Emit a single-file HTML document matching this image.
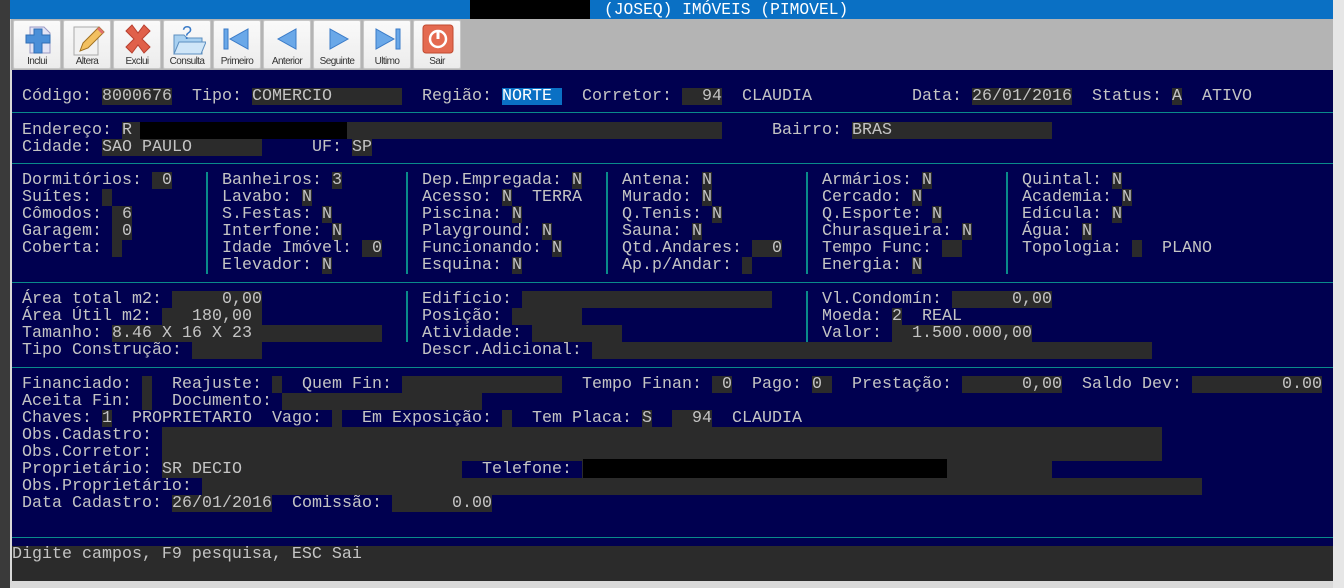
<!DOCTYPE html>
<html><head><meta charset="utf-8"><style>
*{margin:0;padding:0;box-sizing:border-box}
body{width:1344px;height:588px;overflow:hidden;background:#d9d9d9;position:relative;font-family:"Liberation Mono","DejaVu Sans Mono",monospace}
#lf{position:absolute;left:0;top:0;width:10px;height:588px;background:#3a3a3a}
#rt{position:absolute;left:1333px;top:0;width:11px;height:588px;background:#e6e6e6}
#tb{position:absolute;left:10px;top:0;width:1323px;height:19px;background:#0a70c4}
#blk{position:absolute;left:470px;top:0;width:120px;height:22px;background:#000}
#tt{position:absolute;left:604px;top:1px;color:#fff;font-size:16.3px;line-height:17px;white-space:pre}
#tool{position:absolute;left:11px;top:19px;width:1322px;height:51px;background:#b4b4b4}
.bt{position:absolute;top:20px;width:48px;height:49px;background:linear-gradient(#fafafa,#ececec);border:1px solid #c8c8c8;border-radius:2px}
.bt span{position:absolute;left:0;width:100%;bottom:1px;text-align:center;font-family:"Liberation Sans",sans-serif;font-size:10px;letter-spacing:-0.6px;color:#333}
.bt svg{position:absolute;left:6px;top:2px}
#main{position:absolute;left:12px;top:70px;width:1321px;height:476px;background:#000050}
#st{position:absolute;left:12px;top:546px;width:1321px;height:35px;background:#2b2b2b}
.hl{position:absolute;left:12px;width:1321px;height:1px;background:#0a8a8a}
.vl{position:absolute;width:2px;background:#0a8a8a}
.r{position:absolute;left:0;height:17px;width:1344px;margin-top:1px}
.r span,.r b{position:absolute;top:0;height:17px;line-height:17px;font-size:16.67px;color:#c4c4c4;white-space:pre;font-weight:normal}
.r b{background:#2b2b2b}
.r i{position:absolute;top:0;height:17px;background:#000}
</style></head><body>
<div id="lf"></div><div id="rt"></div>
<div id="tb"></div><div id="blk"></div><div id="tt">(JOSEQ) IMÓVEIS (PIMOVEL)</div>
<div id="tool"></div>
<div class="bt" style="left:13px"><svg width="36" height="34"><path d="M10 4h14l6 6v20H10z" fill="#e4e4f4" stroke="#9a9ac4"/><path d="M12 10h8v-6h8v6h8v8h-8v10h-8v-10h-8z" fill="#4b8fd8" stroke="#2f6db5" transform="translate(-6,2)"/></svg><span>Inclui</span></div>
<div class="bt" style="left:63px"><svg width="36" height="34"><rect x="4" y="4" width="24" height="28" fill="#f2f2f2" stroke="#aaa"/><path d="M10 28l3-8 16-16 5 5-16 16z" fill="#f2c060" stroke="#a07020"/><path d="M27 6l5 5 2-2-5-5z" fill="#e07070"/></svg><span>Altera</span></div>
<div class="bt" style="left:113px"><svg width="36" height="34"><path d="M6 8l6-6 6 8 6-8 6 6-8 8 8 8-6 6-6-8-6 8-6-6 8-8z" fill="#e0604a" stroke="#b84030"/></svg><span>Exclui</span></div>
<div class="bt" style="left:163px"><svg width="36" height="34"><path d="M4 12h10l3 3h15v16H4z" fill="#a8d0f0" stroke="#5c8fc0"/><path d="M4 31l5-12h27l-5 12z" fill="#cfe6f8" stroke="#5c8fc0"/><text x="12" y="16" font-size="18" fill="#3a7bc8" font-family="Liberation Sans">?</text></svg><span>Consulta</span></div>
<div class="bt" style="left:213px"><svg width="36" height="34"><rect x="4" y="6" width="4" height="20" fill="#6aa8e8" stroke="#3a7bc8"/><path d="M28 6v20L10 16z" fill="#6aa8e8" stroke="#3a7bc8"/></svg><span>Primeiro</span></div>
<div class="bt" style="left:263px"><svg width="36" height="34"><path d="M26 6v20L8 16z" fill="#6aa8e8" stroke="#3a7bc8"/></svg><span>Anterior</span></div>
<div class="bt" style="left:313px"><svg width="36" height="34"><path d="M10 6v20l18-10z" fill="#6aa8e8" stroke="#3a7bc8"/></svg><span>Seguinte</span></div>
<div class="bt" style="left:363px"><svg width="36" height="34"><path d="M6 6v20l18-10z" fill="#6aa8e8" stroke="#3a7bc8"/><rect x="26" y="6" width="4" height="20" fill="#6aa8e8" stroke="#3a7bc8"/></svg><span>Ultimo</span></div>
<div class="bt" style="left:413px"><svg width="36" height="34"><rect x="3" y="2" width="30" height="28" rx="3" fill="#e46a50" stroke="#c04a30"/><circle cx="18" cy="16" r="8" fill="none" stroke="#fff" stroke-width="2.5"/><rect x="16.5" y="7" width="3" height="9" fill="#fff"/></svg><span>Sair</span></div>
<div id="main"></div><div id="st"></div>
<div class="hl" style="top:112px"></div><div class="hl" style="top:163px"></div><div class="hl" style="top:282px"></div><div class="hl" style="top:367px"></div><div class="hl" style="top:537px"></div>
<div class="vl" style="left:206px;top:172px;height:102px"></div><div class="vl" style="left:406px;top:172px;height:102px"></div><div class="vl" style="left:606px;top:172px;height:102px"></div><div class="vl" style="left:806px;top:172px;height:102px"></div><div class="vl" style="left:1006px;top:172px;height:102px"></div>
<div class="vl" style="left:406px;top:291px;height:51px"></div><div class="vl" style="left:806px;top:291px;height:51px"></div>

<div class="r" style="top:87px"><span style="left:22px">Código:</span><b style="left:102px;width:70px">8000676</b><span style="left:192px">Tipo:</span><b style="left:252px;width:150px">COMERCIO</b><span style="left:422px">Região:</span><b style="left:502px;width:60px;background:#0a70c4;color:#fff">NORTE</b><span style="left:582px">Corretor:</span><b style="left:682px;width:40px">  94</b><span style="left:742px">CLAUDIA</span><span style="left:912px">Data:</span><b style="left:972px;width:100px">26/01/2016</b><span style="left:1092px">Status:</span><b style="left:1172px;width:10px">A</b><span style="left:1202px">ATIVO</span></div>
<div class="r" style="top:121px"><span style="left:22px">Endereço:</span><b style="left:122px;width:600px">R</b><i style="left:140px;width:207px"></i><span style="left:772px">Bairro:</span><b style="left:852px;width:200px">BRAS</b></div>
<div class="r" style="top:138px"><span style="left:22px">Cidade:</span><b style="left:102px;width:160px">SAO PAULO</b><span style="left:312px">UF:</span><b style="left:352px;width:20px">SP</b></div>

<div class="r" style="top:171px"><span style="left:22px">Dormitórios:</span><b style="left:152px;width:20px"> 0</b><span style="left:222px">Banheiros:</span><b style="left:332px;width:10px">3</b><span style="left:422px">Dep.Empregada:</span><b style="left:572px;width:10px">N</b><span style="left:622px">Antena:</span><b style="left:702px;width:10px">N</b><span style="left:822px">Armários:</span><b style="left:922px;width:10px">N</b><span style="left:1022px">Quintal:</span><b style="left:1112px;width:10px">N</b></div>
<div class="r" style="top:188px"><span style="left:22px">Suítes:</span><b style="left:102px;width:10px"></b><span style="left:222px">Lavabo:</span><b style="left:302px;width:10px">N</b><span style="left:422px">Acesso:</span><b style="left:502px;width:10px">N</b><span style="left:532px">TERRA</span><span style="left:622px">Murado:</span><b style="left:702px;width:10px">N</b><span style="left:822px">Cercado:</span><b style="left:912px;width:10px">N</b><span style="left:1022px">Academia:</span><b style="left:1122px;width:10px">N</b></div>
<div class="r" style="top:205px"><span style="left:22px">Cômodos:</span><b style="left:112px;width:20px"> 6</b><span style="left:222px">S.Festas:</span><b style="left:322px;width:10px">N</b><span style="left:422px">Piscina:</span><b style="left:512px;width:10px">N</b><span style="left:622px">Q.Tenis:</span><b style="left:712px;width:10px">N</b><span style="left:822px">Q.Esporte:</span><b style="left:932px;width:10px">N</b><span style="left:1022px">Edícula:</span><b style="left:1112px;width:10px">N</b></div>
<div class="r" style="top:222px"><span style="left:22px">Garagem:</span><b style="left:112px;width:20px"> 0</b><span style="left:222px">Interfone:</span><b style="left:332px;width:10px">N</b><span style="left:422px">Playground:</span><b style="left:542px;width:10px">N</b><span style="left:622px">Sauna:</span><b style="left:692px;width:10px">N</b><span style="left:822px">Churasqueira:</span><b style="left:962px;width:10px">N</b><span style="left:1022px">Água:</span><b style="left:1082px;width:10px">N</b></div>
<div class="r" style="top:239px"><span style="left:22px">Coberta:</span><b style="left:112px;width:10px"></b><span style="left:222px">Idade Imóvel:</span><b style="left:362px;width:20px"> 0</b><span style="left:422px">Funcionando:</span><b style="left:552px;width:10px">N</b><span style="left:622px">Qtd.Andares:</span><b style="left:752px;width:30px">  0</b><span style="left:822px">Tempo Func:</span><b style="left:942px;width:20px"></b><span style="left:1022px">Topologia:</span><b style="left:1132px;width:10px"></b><span style="left:1162px">PLANO</span></div>
<div class="r" style="top:256px"><span style="left:222px">Elevador:</span><b style="left:322px;width:10px">N</b><span style="left:422px">Esquina:</span><b style="left:512px;width:10px">N</b><span style="left:622px">Ap.p/Andar:</span><b style="left:742px;width:10px"></b><span style="left:822px">Energia:</span><b style="left:912px;width:10px">N</b></div>

<div class="r" style="top:290px"><span style="left:22px">Área total m2:</span><b style="left:172px;width:90px">     0,00</b><span style="left:422px">Edifício:</span><b style="left:522px;width:250px"></b><span style="left:822px">Vl.Condomín:</span><b style="left:952px;width:100px">      0,00</b></div>
<div class="r" style="top:307px"><span style="left:22px">Área Útil m2:</span><b style="left:162px;width:100px">   180,00</b><span style="left:422px">Posição:</span><b style="left:512px;width:70px"></b><span style="left:822px">Moeda:</span><b style="left:892px;width:10px">2</b><span style="left:922px">REAL</span></div>
<div class="r" style="top:324px"><span style="left:22px">Tamanho:</span><b style="left:112px;width:270px">8.46 X 16 X 23</b><span style="left:422px">Atividade:</span><b style="left:532px;width:90px"></b><span style="left:822px">Valor:</span><b style="left:892px;width:140px">  1.500.000,00</b></div>
<div class="r" style="top:341px"><span style="left:22px">Tipo Construção:</span><b style="left:192px;width:70px"></b><span style="left:422px">Descr.Adicional:</span><b style="left:592px;width:560px"></b></div>

<div class="r" style="top:375px"><span style="left:22px">Financiado:</span><b style="left:142px;width:10px"></b><span style="left:172px">Reajuste:</span><b style="left:272px;width:10px"></b><span style="left:302px">Quem Fin:</span><b style="left:402px;width:160px"></b><span style="left:582px">Tempo Finan:</span><b style="left:712px;width:20px"> 0</b><span style="left:752px">Pago:</span><b style="left:812px;width:20px">0</b><span style="left:852px">Prestação:</span><b style="left:962px;width:100px">      0,00</b><span style="left:1082px">Saldo Dev:</span><b style="left:1192px;width:130px;text-align:right">0.00</b></div>
<div class="r" style="top:392px"><span style="left:22px">Aceita Fin:</span><b style="left:142px;width:10px"></b><span style="left:172px">Documento:</span><b style="left:282px;width:200px"></b></div>
<div class="r" style="top:409px"><span style="left:22px">Chaves:</span><b style="left:102px;width:10px">1</b><span style="left:132px">PROPRIETARIO</span><span style="left:272px">Vago:</span><b style="left:332px;width:10px"></b><span style="left:362px">Em Exposição:</span><b style="left:502px;width:10px"></b><span style="left:532px">Tem Placa:</span><b style="left:642px;width:10px">S</b><b style="left:672px;width:40px">  94</b><span style="left:732px">CLAUDIA</span></div>
<div class="r" style="top:426px"><span style="left:22px">Obs.Cadastro:</span><b style="left:162px;width:1000px"></b></div>
<div class="r" style="top:443px"><span style="left:22px">Obs.Corretor:</span><b style="left:162px;width:1000px"></b></div>
<div class="r" style="top:460px"><span style="left:22px">Proprietário:</span><b style="left:162px;width:300px">SR DECIO</b><span style="left:482px">Telefone:</span><b style="left:582px;width:470px"></b><i style="left:583px;width:364px;top:-2px;height:20px"></i></div>
<div class="r" style="top:477px"><span style="left:22px">Obs.Proprietário:</span><b style="left:202px;width:1000px"></b></div>
<div class="r" style="top:494px"><span style="left:22px">Data Cadastro:</span><b style="left:172px;width:100px">26/01/2016</b><span style="left:292px">Comissão:</span><b style="left:392px;width:100px">      0.00</b></div>
<div class="r" style="top:545px"><span style="left:12px">Digite campos, F9 pesquisa, ESC Sai</span></div>
</body></html>
